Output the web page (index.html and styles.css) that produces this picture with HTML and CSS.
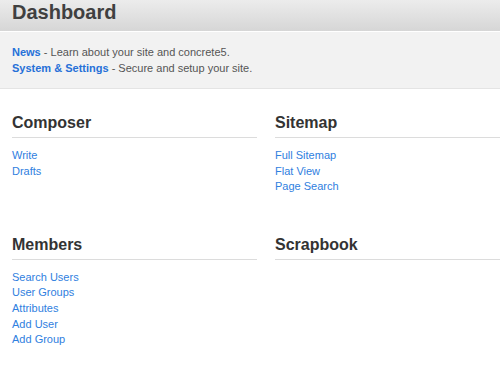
FILE: index.html
```html
<!DOCTYPE html>
<html lang="en">
<head>
    <meta charset="UTF-8">
    <meta name="viewport" content="width=device-width, initial-scale=1.0">
    <title>Dashboard</title>
    <link rel="stylesheet" href="styles.css">
</head>
<body>
    <header class="page-header">
        <h1>Dashboard</h1>
    </header>
    <div class="intro">
        <div><a href="#" class="strong">News</a> - Learn about your site and concrete5.</div>
        <div><a href="#" class="strong">System &amp; Settings</a> - Secure and setup your site.</div>
    </div>
    <div class="sections">
        <div class="section">
            <h2>Composer</h2>
            <ul>
                <li><a href="#">Write</a></li>
                <li><a href="#">Drafts</a></li>
            </ul>
        </div>
        <div class="section">
            <h2>Sitemap</h2>
            <ul>
                <li><a href="#">Full Sitemap</a></li>
                <li><a href="#">Flat View</a></li>
                <li><a href="#">Page Search</a></li>
            </ul>
        </div>
        <div class="section">
            <h2>Members</h2>
            <ul>
                <li><a href="#">Search Users</a></li>
                <li><a href="#">User Groups</a></li>
                <li><a href="#">Attributes</a></li>
                <li><a href="#">Add User</a></li>
                <li><a href="#">Add Group</a></li>
            </ul>
        </div>
        <div class="section">
            <h2>Scrapbook</h2>
            <ul></ul>
        </div>
    </div>
</body>
</html>
```

FILE: styles.css
```css
body { margin: 0; font-family: "Liberation Sans", Arial, sans-serif; background: #fff; color: #555; }
a { color: #2f80e0; text-decoration: none; }
a.strong { font-weight: bold; color: #2670d8; }

.page-header { height: 31px; background: linear-gradient(#ececec, #d6d6d6); border-bottom: 1px solid #fff; }
.page-header h1 { margin: 0; padding: 1px 0 0 12px; font-size: 20px; line-height: 22px; color: #404040; }

.intro { background: #f2f2f2; padding: 12px 12px; border-bottom: 1px solid #e4e4e4; font-size: 11px; line-height: 16px; }

.sections { display: grid; grid-template-columns: 245px 1fr; column-gap: 18px; row-gap: 40px; padding: 24px 0 0 12px; }
.section h2 { margin: 0; padding-bottom: 4px; font-size: 16px; line-height: 20px; color: #333; border-bottom: 1px solid #dcdcdc; }
.section ul { list-style: none; margin: 10px 0 0; padding: 0; font-size: 11px; line-height: 15.6px; }
```
